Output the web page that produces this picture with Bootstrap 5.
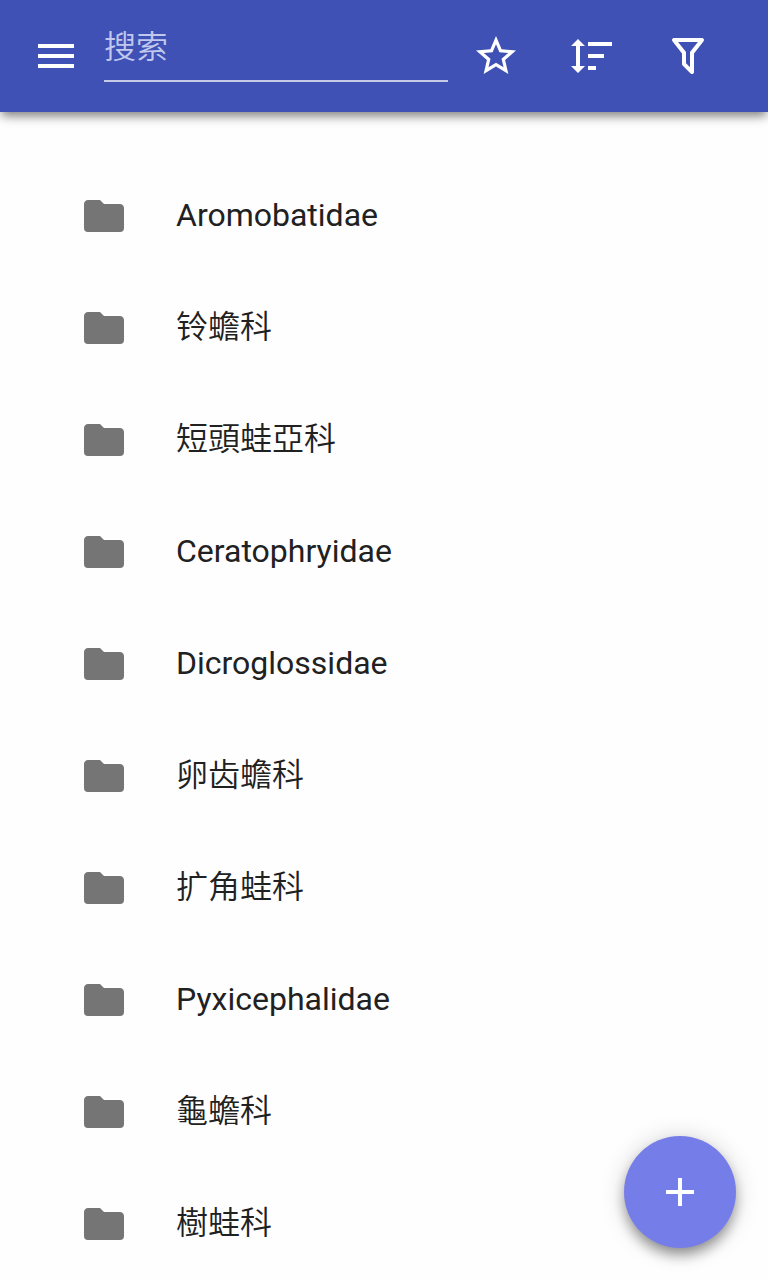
<!DOCTYPE html>
<html lang="zh-CN">
<head>
<meta charset="utf-8">
<meta name="viewport" content="width=device-width, initial-scale=1">
<title>搜索</title>
<link rel="stylesheet" href="https://cdn.jsdelivr.net/npm/bootstrap@5.3.0/dist/css/bootstrap.min.css">
<style>
body { font-family: Roboto, "Noto Sans CJK SC", sans-serif; background: #fefefe; height: 1280px; overflow: hidden; }
svg { width: 48px; height: 48px; fill: currentColor; flex: none; display: block; }
.app-bar { height: 112px; padding: 0 56px 0 32px; background: #3f51b5; box-shadow: 0 2px 14px rgba(0,0,0,.16), 0 6px 9px -2px rgba(0,0,0,.4); }
.app-bar .btn { --bs-btn-color: #fff; --bs-btn-padding-x: 0; --bs-btn-padding-y: 0; --bs-btn-border-width: 0; }
.search-field { width: 344px; height: 66px; margin: -14px 24px 0; padding: 0 0 4px; font-size: 32px; line-height: 60px; color: #fff; border-bottom: 2px solid #c5cae9; }
.search-field::placeholder { color: #c0c8ee; opacity: 1; font-weight: 350; }
.family-list { padding-top: 48px; }
.family-list .list-group-item { height: 112px; gap: 48px; padding: 0 80px; background: none; color: #212121; font-size: 32px; line-height: 48px; }
.family-list svg { color: #757575; }
.family-name { margin-top: -2px; }
.family-name:lang(zh-Hans), .family-name:lang(zh-Hant) { font-weight: 350; }
.fab { right: 32px; bottom: 32px; width: 112px; height: 112px; color: #fff; background: #757de8; box-shadow: 0 8px 14px -2px rgba(0,0,0,.4), 0 2px 24px rgba(0,0,0,.18); }
</style>
</head>
<body>
<header class="app-bar navbar sticky-top flex-nowrap justify-content-start">
  <button class="btn" type="button" aria-label="Menu"><svg viewBox="0 0 24 24"><path d="M3 18h18v-2H3v2zm0-5h18v-2H3v2zm0-7v2h18V6H3z"/></svg></button>
  <input class="search-field form-control-plaintext" type="text" placeholder="搜索">
  <div class="d-flex gap-5">
    <button class="btn" type="button" aria-label="Favorites"><svg viewBox="0 0 24 24"><path d="M22 9.24l-7.19-.62L12 2 9.19 8.63 2 9.24l5.46 4.73L5.82 21 12 17.27 18.18 21l-1.63-7.03L22 9.24zM12 15.4l-3.76 2.27 1-4.28-3.32-2.88 4.38-.38L12 6.1l1.71 4.04 4.38.38-3.32 2.88 1 4.28L12 15.4z"/></svg></button>
    <button class="btn" type="button" aria-label="Sort"><svg viewBox="0 0 24 24"><path d="M6 7h2.5L5 3.5 1.5 7H4v10H1.5L5 20.5 8.5 17H6V7zm4-2v2h12V5H10zm0 8h8v-2h-8v2zm0 6h4v-2h-4v2z"/></svg></button>
    <button class="btn" type="button" aria-label="Filter"><svg viewBox="0 0 24 24"><path d="M15 19.88c.04.3-.06.62-.29.83-.39.39-1.02.39-1.41 0L9.29 16.7a1 1 0 0 1-.29-.83v-5.12L4.21 4.62a1 1 0 0 1 .17-1.4C4.57 3.08 4.78 3 5 3h14c.22 0 .43.08.62.22a1 1 0 0 1 .17 1.4L15 10.75v9.13M7.04 5 11 10.06v5.52l2 2v-7.53L16.96 5H7.04z"/></svg></button>
  </div>
</header>

<svg class="d-none"><symbol id="folder" viewBox="0 0 24 24"><path d="M10 4H4c-1.11 0-2 .89-2 2v12a2 2 0 0 0 2 2h16a2 2 0 0 0 2-2V8c0-1.11-.9-2-2-2h-8l-2-2z"/></symbol></svg>

<main>
  <ul class="family-list list-group list-group-flush">
    <li class="list-group-item d-flex align-items-center border-0"><svg><use href="#folder"/></svg><span class="family-name" lang="la">Aromobatidae</span></li>
    <li class="list-group-item d-flex align-items-center border-0"><svg><use href="#folder"/></svg><span class="family-name" lang="zh-Hans">铃蟾科</span></li>
    <li class="list-group-item d-flex align-items-center border-0"><svg><use href="#folder"/></svg><span class="family-name" lang="zh-Hant">短頭蛙亞科</span></li>
    <li class="list-group-item d-flex align-items-center border-0"><svg><use href="#folder"/></svg><span class="family-name" lang="la">Ceratophryidae</span></li>
    <li class="list-group-item d-flex align-items-center border-0"><svg><use href="#folder"/></svg><span class="family-name" lang="la">Dicroglossidae</span></li>
    <li class="list-group-item d-flex align-items-center border-0"><svg><use href="#folder"/></svg><span class="family-name" lang="zh-Hans">卵齿蟾科</span></li>
    <li class="list-group-item d-flex align-items-center border-0"><svg><use href="#folder"/></svg><span class="family-name" lang="zh-Hans">扩角蛙科</span></li>
    <li class="list-group-item d-flex align-items-center border-0"><svg><use href="#folder"/></svg><span class="family-name" lang="la">Pyxicephalidae</span></li>
    <li class="list-group-item d-flex align-items-center border-0"><svg><use href="#folder"/></svg><span class="family-name" lang="zh-Hant">龜蟾科</span></li>
    <li class="list-group-item d-flex align-items-center border-0"><svg><use href="#folder"/></svg><span class="family-name" lang="zh-Hant">樹蛙科</span></li>
  </ul>
</main>

<button class="fab btn border-0 rounded-circle position-fixed d-flex align-items-center justify-content-center p-0" type="button" aria-label="Add"><svg viewBox="0 0 24 24"><path d="M19 13h-6v6h-2v-6H5v-2h6V5h2v6h6v2z"/></svg></button>
<script src="https://cdn.jsdelivr.net/npm/bootstrap@5.3.0/dist/js/bootstrap.bundle.min.js"></script>
</body>
</html>
